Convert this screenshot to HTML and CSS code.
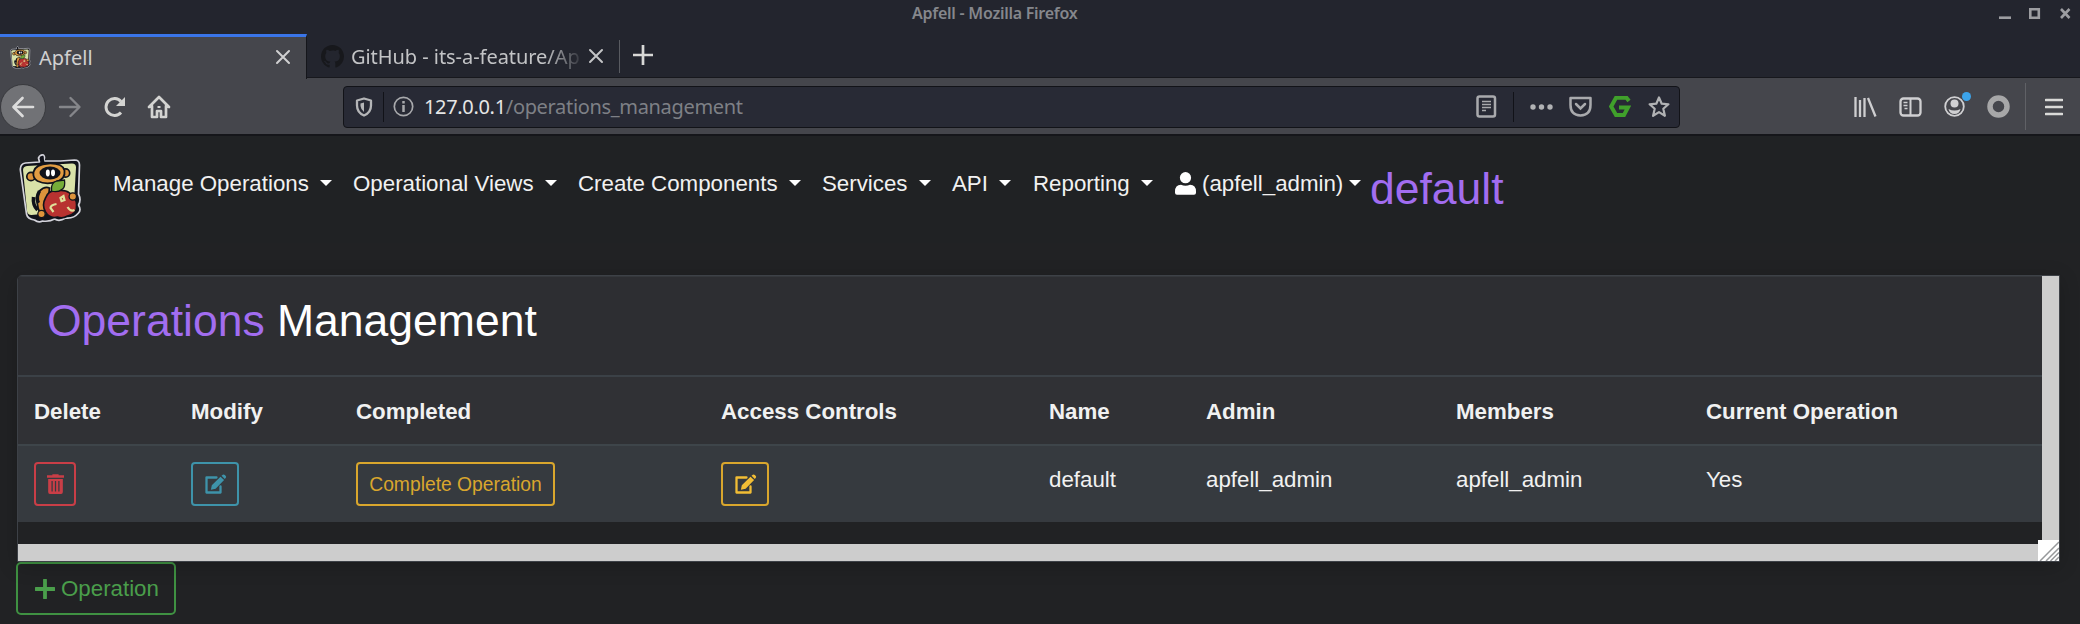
FILE: index.html
```
<!DOCTYPE html>
<html lang="en">
<head>
<meta charset="utf-8">
<title>Apfell</title>
<link rel="stylesheet" href="styles.css">
</head>
<body>
<svg class="defs" width="0" height="0" aria-hidden="true">
  <symbol id="mascot" viewBox="0 0 64 70">
    <path d="M22 9l-1-4q2-4 5-3 2 2 0 6l17 0 14-1q5 0 5 5l-1 29q3 6 0 11 3 5 0 8-5 6-13 5-6 4-11 1-5 3-12 2-4 2-8-1-7-1-8-6L3 18q-1-7 5-8z" fill="#10121a" stroke="#d3d3da" stroke-width="1.700" stroke-linejoin="round"/>
    <path d="M5.500 17q0-3.500 4-4l45-2.500q4 0 4 4L56 58l-42 4q-4 0-4.500-4z" fill="#d9e2a8"/>
    <path d="M24 3.500l1.500 7" stroke="#10121a" stroke-width="3.500"/>
    <circle cx="13.500" cy="23.500" r="4.200" fill="#dc933b" stroke="#10121a" stroke-width="1.700"/>
    <circle cx="48" cy="20" r="4.200" fill="#dc933b" stroke="#10121a" stroke-width="1.700"/>
    <path d="M16 19q2-8 15-8.500 14-.5 16 7 1 8-7 11-11 4-20-.5-5-3-4-9z" fill="#e29c42" stroke="#10121a" stroke-width="1.800"/>
    <ellipse cx="32.500" cy="20" rx="10.500" ry="6.500" fill="#10121a"/>
    <ellipse cx="30.300" cy="20" rx="2" ry="3.400" fill="#fff"/><ellipse cx="35.500" cy="19.800" rx="2" ry="3.400" fill="#fff"/>
    <path d="M22 38q5-5 10-3l-2 20-7 6q-6-10-1-23z" fill="#dc933b" stroke="#10121a" stroke-width="1.800"/>
    <path d="M16 44q-1 8 4 13M22 38q-4 7-1 12" fill="none" stroke="#10121a" stroke-width="3.500"/>
    <path d="M28 45q3-8 10-7 9-2 14 2 7 4 7 12 1 9-9 11-5 3-10 1-8 2-12-5-4-7 0-14z" fill="#b83230" stroke="#10121a" stroke-width="1.600"/>
    <path d="M34 38q-1-8 5-10l8-1q1 7-2 9-5 4-11 2" fill="#75ad39" stroke="#10121a" stroke-width="1.300"/>
    <path d="M39 51q-6 1-6 4l3 4M43 45l3-2 1 4-3 1zM50 54q3 5 7 3" fill="none" stroke="#dfe09a" stroke-width="2.200"/>
    <circle cx="24" cy="61" r="3.700" fill="#dc933b" stroke="#10121a" stroke-width="1.300"/><circle cx="55.300" cy="43.500" r="3.700" fill="#dc933b" stroke="#10121a" stroke-width="1.300"/>
  </symbol>
  <symbol id="edit" viewBox="0 0 22 20">
    <path d="M12 3.500H2v15h14v-6" fill="none" stroke="currentColor" stroke-width="2.300" stroke-linejoin="round" stroke-linecap="round"/>
    <path d="M16 2.700l3.600 3.300-8.500 8.700-4.700 1.100.9-4.500zM17 1.700l1.300-1q1-.7 2 .2l1 1q.8 1 0 1.900l-1 1.200z" fill="currentColor"/>
  </symbol>
  <symbol id="close" viewBox="0 0 16 16"><path d="M2 2l12 12M14 2L2 14" fill="none" stroke="currentColor" stroke-width="2" stroke-linecap="round"/></symbol>
</svg>

<header class="browser">
  <div class="titlebar">
    <span class="window-title">Apfell - Mozilla Firefox</span>
    <svg class="window-controls" width="76" height="14" viewBox="0 0 76 14"><path d="M1 10.700h12" stroke="#9c9da1" stroke-width="2.600"/><path d="M32.300 2.300h8.500v8.500h-8.500z" fill="none" stroke="#9c9da1" stroke-width="2.600"/><path d="M63 2l8.500 9M71.500 2L63 11" stroke="#9c9da1" stroke-width="2.600"/></svg>
  </div>
  <div class="tabs">
    <div class="tab active"><svg class="favicon" width="22" height="23"><use href="#mascot"/></svg><span class="tab-title">Apfell</span><svg class="tab-close" width="16" height="16"><use href="#close"/></svg></div>
    <div class="tab second"><svg class="github" width="23" height="23" viewBox="0 0 16 16"><path fill="#17181c" d="M8 0C3.580 0 0 3.580 0 8c0 3.540 2.290 6.530 5.470 7.590.4.070.55-.17.55-.38 0-.19-.01-.82-.01-1.490-2.010.37-2.530-.49-2.690-.94-.09-.23-.48-.94-.82-1.130-.28-.15-.68-.52-.01-.53.63-.01 1.080.58 1.230.82.72 1.210 1.870.87 2.330.66.07-.52.28-.87.51-1.070-1.780-.2-3.640-.89-3.640-3.950 0-.87.31-1.590.82-2.150-.08-.2-.36-1.020.08-2.120 0 0 .67-.21 2.200.82A7.600 7.600 0 0 1 8 3.870c.68 0 1.360.09 2 .27 1.530-1.040 2.200-.82 2.200-.82.44 1.100.16 1.920.08 2.120.51.56.82 1.270.82 2.150 0 3.070-1.870 3.750-3.650 3.950.29.25.54.73.54 1.480 0 1.070-.01 1.930-.01 2.200 0 .21.15.46.55.38A8 8 0 0 0 16 8c0-4.420-3.580-8-8-8z"/></svg><span class="tab-title faded">GitHub - its-a-feature/Ap</span><svg class="tab-close" width="16" height="16"><use href="#close"/></svg></div>
    <svg class="new-tab" width="20" height="20" viewBox="0 0 20 20"><path d="M10 0v20M0 10h20" stroke="#d8d8d6" stroke-width="2.700"/></svg>
  </div>
  <div class="toolbar">
    <div class="nav-buttons">
      <span class="back"><svg width="24" height="22" viewBox="0 0 24 22"><path d="M22 11H3M11.500 2L2.500 11l9 9" fill="none" stroke="#dcdcdc" stroke-width="2.700" stroke-linecap="round" stroke-linejoin="round"/></svg></span>
      <svg class="forward" width="24" height="22" viewBox="0 0 24 22"><path d="M2 11h19M12.500 2l9 9-9 9" fill="none" stroke="#85868a" stroke-width="2.400" stroke-linecap="round" stroke-linejoin="round"/></svg>
      <svg class="reload" width="24" height="22" viewBox="0 0 24 22"><path d="M18 16.500A8.500 8.500 0 1 1 18 5.500" fill="none" stroke="#d4d4d2" stroke-width="2.900"/><path d="M22 1v9h-9z" fill="#d4d4d2"/></svg>
      <svg class="home" width="24" height="24" viewBox="0 0 24 24"><path d="M2 12L12 2l10 10M5 11v11h5v-6h4v6h5V11" fill="none" stroke="#d4d4d2" stroke-width="2.700" stroke-linejoin="round" stroke-linecap="round"/><path d="M10.500 12h3" stroke="#d4d4d2" stroke-width="2"/></svg>
    </div>
    <div class="urlbar">
      <svg class="shield" width="18" height="20" viewBox="0 0 18 20"><path d="M9 1.500l7 2v5q0 7-7 10-7-3-7-10v-5z" fill="none" stroke="#b5b6b8" stroke-width="2.300" stroke-linejoin="round"/><path d="M9 5.500L5.500 6.500v2.500q.3 3.500 3.500 6z" fill="#b5b6b8"/></svg>
      <i class="url-rule"></i>
      <svg class="info" width="21" height="21" viewBox="0 0 21 21"><circle cx="10.500" cy="10.500" r="9.200" fill="none" stroke="#a8a9ac" stroke-width="1.700"/><path d="M10.500 9v7M10.500 5v2.500" stroke="#a8a9ac" stroke-width="2.500"/></svg>
      <span class="url"><b>127.0.0.1</b>/operations_management</span>
      <div class="url-actions">
        <svg width="21" height="23" viewBox="0 0 21 23"><rect x="1.500" y="1.500" width="17.500" height="20" rx="2" fill="none" stroke="#a9aaad" stroke-width="2.500"/><path d="M6 6.500h9M6 9.500h9M6 12.500h9M6 15.500h4" stroke="#a9aaad" stroke-width="1.500"/></svg>
        <i class="url-rule"></i>
        <svg width="23" height="8" viewBox="0 0 23 8" fill="#b1b2b4"><circle cx="3" cy="4" r="2.700"/><circle cx="11.500" cy="4" r="2.700"/><circle cx="20" cy="4" r="2.700"/></svg>
        <svg width="23" height="21" viewBox="0 0 23 21"><path d="M1.500 2h20v7q0 10-10 10.500Q1.500 19 1.500 9z" fill="none" stroke="#a9aaad" stroke-width="2.500" stroke-linejoin="round"/><path d="M7 8l4.500 4.500L16 8" fill="none" stroke="#a9aaad" stroke-width="2.500" stroke-linecap="round"/></svg>
        <svg width="22" height="21" viewBox="0 0 22 21"><path d="M20 5l-2.500-3.200H7L2.200 10.500 7 19h8l4-7.500h-9" fill="none" stroke="#40a02b" stroke-width="4"/></svg>
        <svg width="24" height="24" viewBox="0 0 24 24"><path d="M12 2.500l2.700 6.200 6.700.6-5.100 4.500 1.600 7-5.900-3.700-5.900 3.700 1.600-7-5.100-4.500 6.700-.6z" fill="none" stroke="#b1b2b4" stroke-width="2.200" stroke-linejoin="round"/></svg>
      </div>
    </div>
    <div class="extras">
      <svg width="23" height="20" viewBox="0 0 23 20"><path d="M1.500 0v20M6 3v17M10.500 1v19M14 1l7.500 18.500" stroke="#ceced0" stroke-width="2.300"/></svg>
      <svg width="23" height="20" viewBox="0 0 23 20"><rect x="1.500" y="1.500" width="20" height="17" rx="3" fill="none" stroke="#d0d0d2" stroke-width="2.300"/><path d="M11.500 1v18" stroke="#d0d0d2" stroke-width="2"/><path d="M4.500 5.500h4M4.500 8.500h4M5.500 11.500h3" stroke="#d0d0d2" stroke-width="1.400"/></svg>
      <span class="account"><svg width="21" height="21" viewBox="0 0 21 21"><circle cx="10.500" cy="10.500" r="9.300" fill="none" stroke="#d0d0d2" stroke-width="1.800"/><circle cx="10.500" cy="7.500" r="4" fill="#d0d0d2"/><path d="M4.500 13q6 3 12 0-1 5-6 5t-6-5" fill="#d0d0d2"/></svg><i class="notice"></i></span>
      <svg width="23" height="23" viewBox="0 0 23 23"><circle cx="11.500" cy="11.500" r="8.500" fill="none" stroke="#a7a7a8" stroke-width="5.500"/></svg>
      <i class="extras-rule"></i>
      <svg width="18" height="18" viewBox="0 0 18 18"><path d="M1 2h16M1 9h16M1 16h16" stroke="#dadad8" stroke-width="2.600" stroke-linecap="round"/></svg>
    </div>
  </div>
</header>

<nav class="navbar">
  <svg class="brand" width="65" height="70"><use href="#mascot"/></svg>
  <div class="menu">
    <a class="menu-item">Manage Operations<i class="caret"></i></a>
    <a class="menu-item">Operational Views<i class="caret"></i></a>
    <a class="menu-item">Create Components<i class="caret"></i></a>
    <a class="menu-item">Services<i class="caret"></i></a>
    <a class="menu-item">API<i class="caret"></i></a>
    <a class="menu-item">Reporting<i class="caret"></i></a>
    <a class="menu-item user"><svg width="21" height="23" viewBox="0 0 21 23" fill="#fff"><circle cx="10.500" cy="5.700" r="5.600"/><path d="M0 19.500q0-6.500 6-6.700 4.500 2 9 0 6 .2 6 6.700v1.200q0 2-2 2H2q-2 0-2-2z"/></svg>(apfell_admin)<i class="caret"></i></a>
  </div>
  <span class="operation">default</span>
</nav>

<main class="content">
  <section class="card">
    <div class="card-main">
      <div class="card-body">
        <h1 class="card-title"><span class="accent">Operations</span> Management</h1>
        <div class="row head"><span>Delete</span><span>Modify</span><span>Completed</span><span>Access Controls</span><span>Name</span><span>Admin</span><span>Members</span><span>Current Operation</span></div>
        <div class="row data">
          <div><button class="btn danger"><svg width="17" height="20" viewBox="0 0 19 20" preserveAspectRatio="none"><path d="M0 2.500h19M6 1.300h7" stroke="currentColor" stroke-width="2.300"/><path d="M1.300 5h16.400v13q0 2-2 2H3.300q-2 0-2-2zM5 7v10.500h1.400V7zm3.800 0v10.500h1.400V7zm3.800 0v10.500H14V7z" fill="currentColor" fill-rule="evenodd"/></svg></button></div>
          <div><button class="btn info-btn"><svg width="23" height="20"><use href="#edit"/></svg></button></div>
          <div><button class="btn warning wide">Complete Operation</button></div>
          <div><button class="btn warning"><svg width="23" height="20" class="bright"><use href="#edit"/></svg></button></div>
          <span>default</span><span>apfell_admin</span><span>apfell_admin</span><span>Yes</span>
        </div>
      </div>
      <div class="scroll-y"></div>
    </div>
    <div class="scroll-x"></div>
    <svg class="resizer" width="21" height="21" viewBox="0 0 21 21"><path fill="#fff" d="M0 0h21v21H0z"/><path d="M2 21L21 2M8 21L21 8M12.500 21l8.500-8.500M17 21l4-4" stroke="#96989a" stroke-width="1.500"/></svg>
  </section>
  <button class="add"><svg width="20" height="20" viewBox="0 0 20 20"><path d="M10 1v18M1 10h18" stroke="currentColor" stroke-width="3.800" stroke-linecap="round"/></svg>Operation</button>
</main>
</body>
</html>
```
FILE: styles.css
```
* { box-sizing: border-box; }
body {
  margin: 0;
  width: 2080px;
  height: 624px;
  overflow: hidden;
  background: #212224;
  color: #f1f1f1;
  font: 22.3px "Liberation Sans", Arial, sans-serif;
}
svg { display: block; flex: none; }
.defs { position: absolute; }

/* Browser window */
.browser { font-family: "Noto Sans", sans-serif; font-size: 20px; background: #23252e; }
.titlebar { height: 34px; display: flex; justify-content: space-between; padding: 0 6px 0 912px; }
.window-title { font-size: 16px; letter-spacing: -.25px; font-weight: 600; line-height: 26px; color: #85878c; white-space: nowrap; }
.window-controls { margin-top: 7px; }
.tabs { height: 44px; display: flex; box-shadow: inset 0 -1px #17181d; }
.tab { display: flex; align-items: center; height: 44px; color: #d0d0d1; white-space: nowrap; }
.tab.active { width: 307px; height: 45px; padding: 0 15px 2px 9px; background: #45464c; border-top: 3px solid #3a75e8; border-right: 1px solid #15161b; z-index: 1; }
.favicon { margin-right: 8px; }
.tab.active .tab-close { margin-left: auto; }
.tab.second { width: 313px; padding: 2px 16px 2px 14px; position: relative; color: #c3c4c6; }
.tab.second::after { content: ""; position: absolute; right: 0; top: 6px; height: 33px; width: 1px; background: #595b61; }
.github { margin-right: 7px; }
.tab-title.faded { flex: none; letter-spacing: -.05px; mask-image: linear-gradient(90deg, #000 85%, transparent 102%); }
.second .tab-close { margin-left: auto; }
.new-tab { margin: 11px 0 0 13px; }
.toolbar { height: 58px; display: flex; align-items: center; background: #45464c; border-bottom: 2px solid #15161a; padding-top: 1px; }
.nav-buttons { width: 343px; display: flex; align-items: center; }
.back { width: 46px; height: 46px; border-radius: 50%; background: #717276; border: 1px solid #38393d; display: flex; align-items: center; justify-content: center; }
.forward { margin-left: 12px; }
.reload { margin-left: 21px; }
.home { margin-left: 20px; }
.urlbar { width: 1337px; height: 42px; border: 1px solid #121318; border-radius: 4px; background: #282a35; display: flex; align-items: center; padding: 0 8px 0 11px; }
.url-rule { width: 1px; height: 30px; background: #111218; }
.shield { margin-right: 10px; }
.info { margin: 0 10px 0 9px; }
.url { color: #7e8086; line-height: 30px; letter-spacing: -.33px; padding-top: 1px; }
.url b { font-weight: 400; color: #e6e6e6; }
.url-actions { margin-left: auto; display: flex; align-items: center; gap: 16.500px; }
.url-actions .url-rule { margin-right: -1px; }
.extras { flex: 1; display: flex; align-items: center; padding: 0 15px 0 174px; gap: 22px; }
.account { position: relative; }
.notice { position: absolute; width: 9px; height: 9px; right: -6px; top: -4px; border-radius: 50%; background: #3ca4ea; }
.extras-rule { width: 1px; height: 47px; background: #606166; margin: 0 -3px 0 -7px; }

/* Application */
.navbar { height: 107px; display: flex; background: #202224; padding: 17px 0 0 17px; }
.menu { display: flex; width: 1257px; margin: 18px 0 0 31px; line-height: 26px; }
.menu-item { flex: none; display: flex; width: 240px; white-space: nowrap; }
.menu-item:nth-child(2) { width: 225px; }
.menu-item:nth-child(3) { width: 244px; }
.menu-item:nth-child(4) { width: 130px; }
.menu-item:nth-child(5) { width: 81px; }
.menu-item:nth-child(6) { width: 142px; }
.menu-item.user { width: 190px; }
.caret { margin: 9px 0 0 11px; width: 0; height: 0; border: 6px solid transparent; border-top-color: #fff; border-bottom: 0; }
.user svg { margin: 1px 6px 0 0; }
.user .caret { margin-left: 6px; }
.operation { color: #a26df0; font-size: 44.500px; line-height: 50px; margin-top: 11px; }
.content { padding: 32px 20px 0 17px; }
.card { position: relative; border: 1px solid #3d4147; border-radius: 5px 0 0 0; height: 287px; box-shadow: 0 4px 20px rgba(0,0,0,.2); }
.card-main { display: flex; height: 268px; background: #212224; border-radius: 4px 0 0 0; overflow: hidden; }
.card-body { flex: 1; }
.card-title { height: 101px; margin: 0; padding: 19px 0 0 29px; background: #2d2e32; border-top: 1px solid #35383c; border-bottom: 2px solid #3b4147; color: #fff; font-size: 44.500px; line-height: 50px; font-weight: 400; }
.accent { color: #a26df0; }
.row { display: grid; grid-template-columns: 157px 165px 365px 328px 157px 250px 250px 1fr; padding-left: 16px; }
.head { height: 69px; background: #303135; border-bottom: 2px solid #3e454a; font-weight: 700; line-height: 69px; }
.data { height: 76px; background: #363a3f; padding-top: 16px; line-height: 35px; }
.btn { height: 44px; width: 48px; padding: 0; display: flex; align-items: center; justify-content: center; font: 19.3px "Liberation Sans", Arial, sans-serif; background: transparent; border: 2px solid currentColor; border-radius: 4px; }
.danger { width: 42px; color: #c93e47; }
.info-btn { color: #3e93aa; }
.warning { color: #d9a62d; }
.bright { color: #f2bd35; }
.wide { width: 199px; padding-top: 2px; white-space: nowrap; }
.scroll-y { width: 17px; background: #cdcdcd; }
.scroll-x { height: 17px; background: #cdcdcd; }
.resizer { position: absolute; right: 0; bottom: 0; }
.add { display: flex; align-items: center; gap: 6px; width: 160px; height: 53px; margin-left: -1px; padding: 0 0 0 17px; background: transparent; border: 2px solid #3f9142; border-radius: 5px; color: #4a9e4b; font: 22.3px "Liberation Sans", Arial, sans-serif; }
```
